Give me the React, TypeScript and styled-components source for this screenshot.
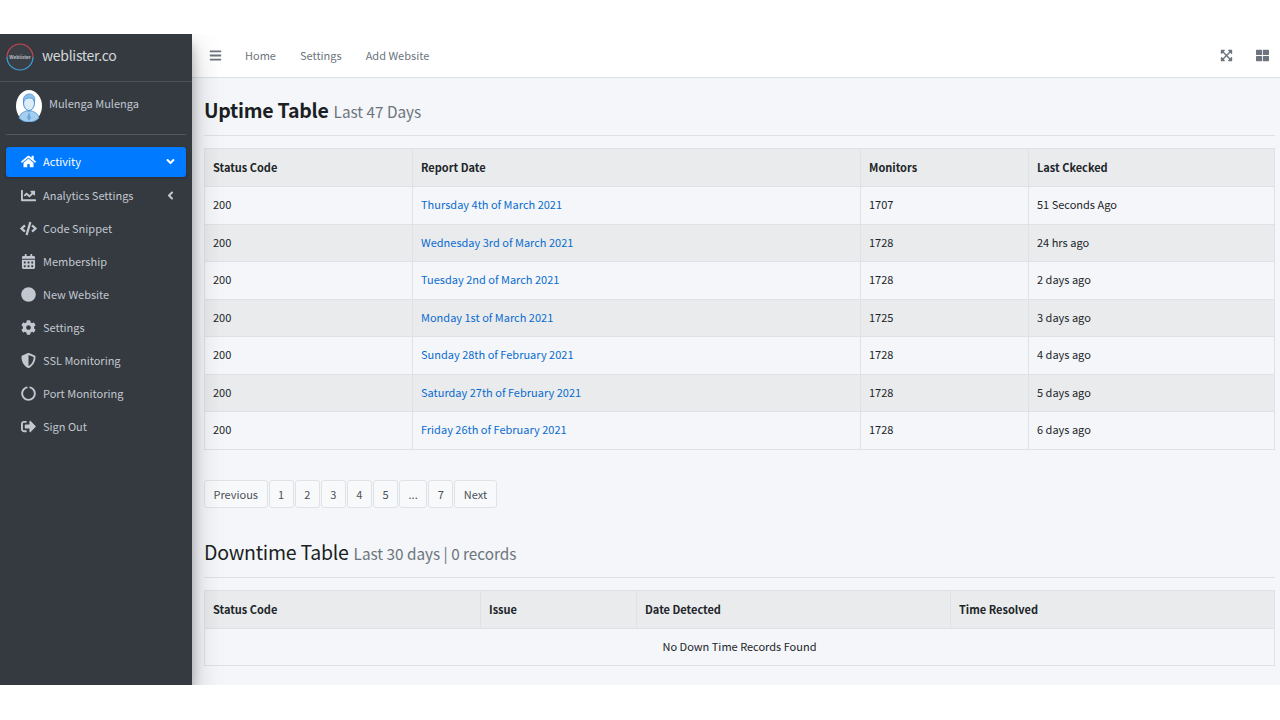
import React from 'react';
import styled, { createGlobalStyle } from 'styled-components';
import {
  FaAngleDown,
  FaAngleLeft,
  FaBars,
  FaCalendarAlt,
  FaChartLine,
  FaCircle,
  FaCircleNotch,
  FaCode,
  FaCog,
  FaExpandArrowsAlt,
  FaHome,
  FaShieldAlt,
  FaSignOutAlt,
  FaThLarge,
} from 'react-icons/fa';

const GlobalStyle = createGlobalStyle`
  html, body {
    margin: 0;
    background: #fff;
  }
  * {
    box-sizing: border-box;
  }
  body {
    font-family: "Noto Sans CJK SC", "Open Sans", sans-serif;
    color: #212529;
  }
`;

const Frame = styled.div`
  width: 1280px;
  height: 651px;
  margin: 34px 0 35px;
  display: flex;
  overflow: hidden;
  background: #f4f6f9;
`;

const Sidebar = styled.aside`
  width: 192px;
  flex-shrink: 0;
  background: #343a40;
  box-shadow: 0 14px 28px rgba(0, 0, 0, 0.25), 0 10px 10px rgba(0, 0, 0, 0.22);
  position: relative;
`;

const Brand = styled.div`
  height: 48px;
  display: flex;
  align-items: center;
  gap: 8px;
  padding-left: 6px;
  padding-bottom: 2px;
  border-bottom: 1px solid #4b545c;
  color: #d5d8da;
  font-size: 14px;
  line-height: 20px;
  letter-spacing: -0.3px;
`;

const BrandName = styled.span`
  margin-bottom: 3px;
`;

const UserPanel = styled.div`
  height: 53px;
  margin: 0 6px;
  display: flex;
  align-items: center;
  gap: 7px;
  padding-left: 10px;
  padding-bottom: 4px;
  border-bottom: 1px solid #4f5962;
  color: #c2c7d0;
  font-size: 11px;
  line-height: 16px;
`;

const UserName = styled.span`
  margin-bottom: 6px;
`;

const Menu = styled.nav`
  margin: 12px 6px 0;
  display: flex;
  flex-direction: column;
  gap: 3px;
`;

const MenuItem = styled.a<{ $active?: boolean }>`
  height: 30px;
  flex-shrink: 0;
  border-radius: 3px;
  display: flex;
  align-items: center;
  padding: 0 9px ${(p) => (p.$active ? '2px' : '0')} 14px;
  font-size: 11px;
  line-height: 16px;
  background: ${(p) => (p.$active ? '#007bff' : 'transparent')};
  color: ${(p) => (p.$active ? '#fff' : '#c2c7d0')};
  box-shadow: ${(p) => (p.$active ? '0 1px 3px rgba(0, 0, 0, 0.2)' : 'none')};
`;

const MenuIcon = styled.span`
  width: 17px;
  margin-right: 6px;
  display: flex;
  justify-content: center;
  font-size: 15px;
`;

const MenuLabel = styled.span`
  flex: 1;
`;

const Main = styled.div`
  flex: 1;
  min-width: 0;
`;

const Navbar = styled.header`
  height: 44px;
  background: #fff;
  border-bottom: 1px solid #dee2e6;
  display: flex;
  align-items: center;
  padding: 0 11px 0 17px;
  color: #6c757d;
  font-size: 11px;
  line-height: 16px;
`;

const NavLinks = styled.div`
  display: flex;
  gap: 24px;
  margin-left: 23px;
  padding-bottom: 2px;
  flex: 1;
`;

const NavIcons = styled.div`
  display: flex;
  gap: 23px;
  font-size: 13px;
  align-items: center;
`;

const Content = styled.main`
  padding: 0 5px 0 12px;
`;

const PageTitle = styled.div<{ $top: number }>`
  margin-top: ${(p) => p.$top}px;
  height: 41px;
  border-bottom: 1px solid #dee2e6;
  display: flex;
  align-items: baseline;
  gap: 5px;
`;

const TitleText = styled.h1<{ $bold?: boolean }>`
  margin: 0;
  font-size: 19.5px;
  line-height: 30px;
  letter-spacing: -0.25px;
  font-weight: ${(p) => (p.$bold ? 700 : 400)};
  color: #1b1f23;
`;

const TitleNote = styled.small`
  font-size: 15.3px;
  color: #6c757d;
`;

const Table = styled.table`
  width: 100%;
  border-collapse: collapse;
  table-layout: fixed;
  margin-top: 12px;
  font-size: 11px;
  line-height: 16px;
  border: 1px solid #dee2e6;
`;

const HeadCell = styled.th`
  height: 38px;
  text-align: left;
  padding: 0 8px 1px;
  font-weight: 700;
  color: #212529;
  background: #e9ebed;
  border-left: 1px solid #dee2e6;
  border-bottom: 1px solid #dee2e6;
`;

const Row = styled.tr<{ $shaded: boolean }>`
  background: ${(p) => (p.$shaded ? '#e9ebed' : '#f4f6f9')};
`;

const Cell = styled.td<{ $center?: boolean }>`
  height: 37.5px;
  padding: 0 8px 2px;
  border-left: 1px solid #dee2e6;
  border-top: 1px solid #dee2e6;
  text-align: ${(p) => (p.$center ? 'center' : 'left')};
`;

const DateLink = styled.a`
  color: #0a6ccf;
`;

const Pager = styled.div`
  display: flex;
  margin-top: 30px;
  gap: 1px;
`;

const PageButton = styled.a`
  height: 28px;
  min-width: 25px;
  padding: 0 8.5px;
  display: flex;
  align-items: center;
  justify-content: center;
  font-size: 11px;
  line-height: 16px;
  color: #495057;
  background: #f8f9fb;
  border: 1px solid #dfe3e7;
  border-radius: 3px;
`;

const uptimeRows = [
  ['Thursday 4th of March 2021', '1707', '51 Seconds Ago'],
  ['Wednesday 3rd of March 2021', '1728', '24 hrs ago'],
  ['Tuesday 2nd of March 2021', '1728', '2 days ago'],
  ['Monday 1st of March 2021', '1725', '3 days ago'],
  ['Sunday 28th of February 2021', '1728', '4 days ago'],
  ['Saturday 27th of February 2021', '1728', '5 days ago'],
  ['Friday 26th of February 2021', '1728', '6 days ago'],
];

const menuItems = [
  { label: 'Activity', icon: <FaHome />, active: true, arrow: <FaAngleDown size={13} /> },
  { label: 'Analytics Settings', icon: <FaChartLine />, arrow: <FaAngleLeft size={13} /> },
  { label: 'Code Snippet', icon: <FaCode size={17} /> },
  { label: 'Membership', icon: <FaCalendarAlt /> },
  { label: 'New Website', icon: <FaCircle /> },
  { label: 'Settings', icon: <FaCog /> },
  { label: 'SSL Monitoring', icon: <FaShieldAlt /> },
  { label: 'Port Monitoring', icon: <FaCircleNotch /> },
  { label: 'Sign Out', icon: <FaSignOutAlt /> },
];

const pages = ['Previous', '1', '2', '3', '4', '5', '...', '7', 'Next'];

const Logo = () => (
  <svg width="28" height="28" viewBox="0 0 28 28">
    <circle cx="14" cy="14" r="13" fill="#3a3f45" />
    <path d="M1 14a13 13 0 0 1 26 0" fill="none" stroke="#c9474f" strokeWidth="1.2" />
    <path d="M1 14a13 13 0 0 0 26 0" fill="none" stroke="#3f9fd8" strokeWidth="1.2" />
    <text x="14" y="15.5" textAnchor="middle" fontSize="4.6" fontWeight="700" letterSpacing="0" fill="#b9bec4">
      Weblister
    </text>
  </svg>
);

const Avatar = () => (
  <svg width="26" height="32" viewBox="0 0 26 32">
    <ellipse cx="13" cy="16" rx="13" ry="16" fill="#fff" />
    <path d="M3 28c1-5 5-6 7-7h6c2 1 6 2 7 7-3 3-6 4-10 4s-7-1-10-4z" fill="#a5cdee" stroke="#4a90d0" strokeWidth="0.8" />
    <path d="M13 22l-2 6 2 3 2-3z" fill="#6aa8de" />
    <ellipse cx="13" cy="13" rx="5.5" ry="7.5" fill="#dcecf9" stroke="#4a90d0" strokeWidth="1" />
    <path d="M7.5 12c-1-6 3-8 6-8s6 2 5 8c-1-3-2-4-5-4s-5 1-6 4z" fill="#8fc0ea" stroke="#4a90d0" strokeWidth="0.8" />
  </svg>
);

const App = () => {
  return (
    <>
      <GlobalStyle />
      <Frame>
        <Sidebar>
          <Brand>
            <Logo />
            <BrandName>weblister.co</BrandName>
          </Brand>
          <UserPanel>
            <Avatar />
            <UserName>Mulenga Mulenga</UserName>
          </UserPanel>
          <Menu>
            {menuItems.map((item) => (
              <MenuItem key={item.label} $active={item.active}>
                <MenuIcon>{item.icon}</MenuIcon>
                <MenuLabel>{item.label}</MenuLabel>
                {item.arrow}
              </MenuItem>
            ))}
          </Menu>
        </Sidebar>
        <Main>
          <Navbar>
            <FaBars size={13} />
            <NavLinks>
              <span>Home</span>
              <span>Settings</span>
              <span>Add Website</span>
            </NavLinks>
            <NavIcons>
              <FaExpandArrowsAlt />
              <FaThLarge />
            </NavIcons>
          </Navbar>
          <Content>
            <PageTitle $top={17}>
              <TitleText $bold>Uptime Table</TitleText>
              <TitleNote>Last 47 Days</TitleNote>
            </PageTitle>
            <Table>
              <colgroup>
                <col style={{ width: 208 }} />
                <col style={{ width: 448 }} />
                <col style={{ width: 168 }} />
                <col />
              </colgroup>
              <thead>
                <tr>
                  <HeadCell>Status Code</HeadCell>
                  <HeadCell>Report Date</HeadCell>
                  <HeadCell>Monitors</HeadCell>
                  <HeadCell>Last Ckecked</HeadCell>
                </tr>
              </thead>
              <tbody>
                {uptimeRows.map((row, i) => (
                  <Row key={row[0]} $shaded={i % 2 === 1}>
                    <Cell>200</Cell>
                    <Cell>
                      <DateLink>{row[0]}</DateLink>
                    </Cell>
                    <Cell>{row[1]}</Cell>
                    <Cell>{row[2]}</Cell>
                  </Row>
                ))}
              </tbody>
            </Table>
            <Pager>
              {pages.map((page) => (
                <PageButton key={page}>{page}</PageButton>
              ))}
            </Pager>
            <PageTitle $top={29}>
              <TitleText>Downtime Table</TitleText>
              <TitleNote>Last 30 days | 0 records</TitleNote>
            </PageTitle>
            <Table>
              <colgroup>
                <col style={{ width: 276 }} />
                <col style={{ width: 156 }} />
                <col style={{ width: 314 }} />
                <col />
              </colgroup>
              <thead>
                <tr>
                  <HeadCell>Status Code</HeadCell>
                  <HeadCell>Issue</HeadCell>
                  <HeadCell>Date Detected</HeadCell>
                  <HeadCell>Time Resolved</HeadCell>
                </tr>
              </thead>
              <tbody>
                <Row $shaded={false}>
                  <Cell colSpan={4} $center>
                    No Down Time Records Found
                  </Cell>
                </Row>
              </tbody>
            </Table>
          </Content>
        </Main>
      </Frame>
    </>
  );
};

export default App;
